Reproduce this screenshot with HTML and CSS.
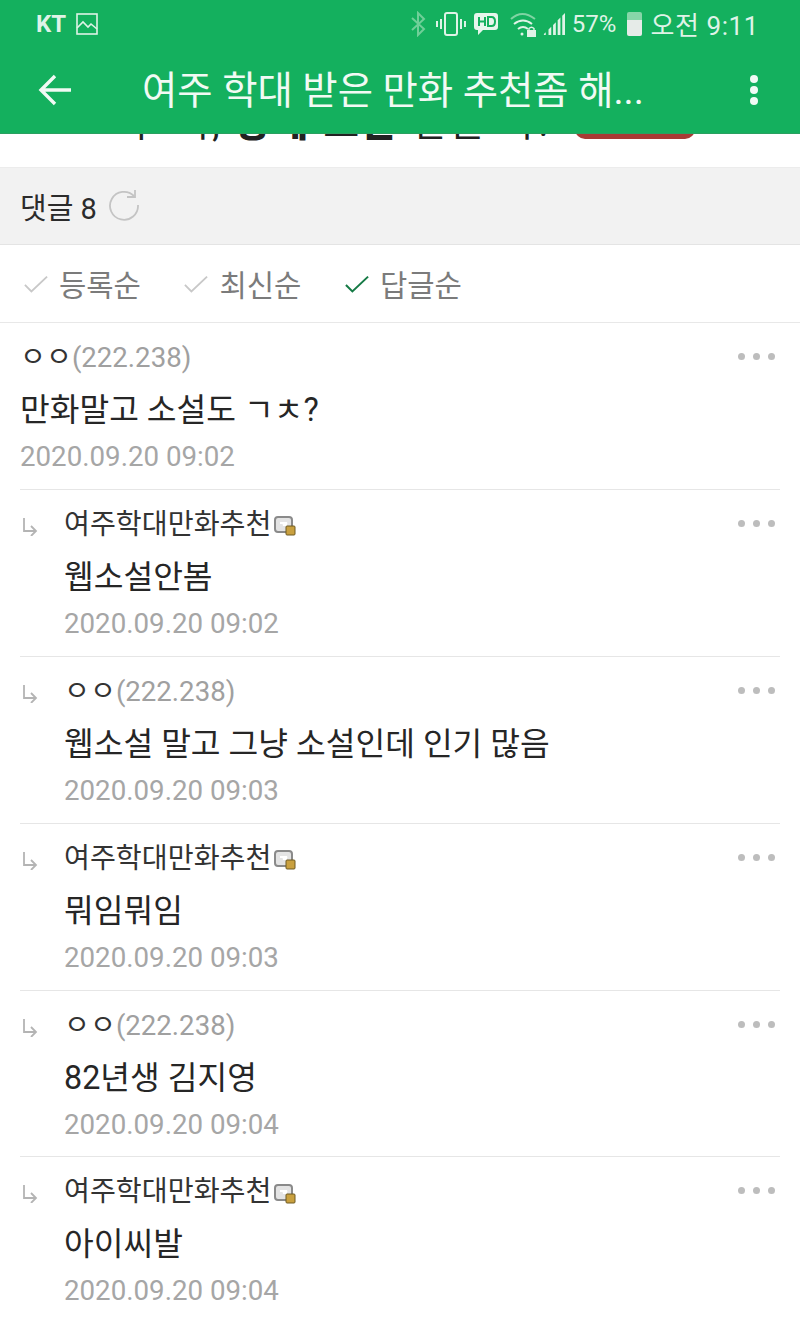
FILE: index.html
```html
<!DOCTYPE html>
<html lang="ko">
<head>
    <meta charset="UTF-8">
    <title>댓글</title>
    <link rel="stylesheet" href="styles.css">
</head>
<body>
    <!-- Status bar and title -->
    <header class="app-head">
        <div class="status-bar">
            <div class="status-left">
                <span class="carrier">KT</span>
                <svg class="pic-icon" width="22" height="22" viewBox="0 0 22 22" fill="none" stroke="#dff3e7" stroke-width="1.6"><rect x="1" y="1" width="20" height="20"/><path d="M1 15l6-6 5 5 3-3 6 5"/></svg>
            </div>
            <div class="status-right">
                <svg class="bt" width="16" height="26" viewBox="0 0 16 26" fill="none" stroke="#6fcf98" stroke-width="2"><path d="M2 7l12 11-6 6V2l6 6L2 19"/></svg>
                <svg class="vib" width="30" height="26" viewBox="0 0 30 26" fill="none" stroke="#dff3e7" stroke-width="2"><rect x="9" y="2" width="12" height="22" rx="2"/><path d="M5 8v10M1 10v6M25 8v10M29 10v6"/></svg>
                <svg class="hd" width="26" height="24" viewBox="0 0 26 24"><path d="M4 1h18a3 3 0 0 1 3 3v11a3 3 0 0 1-3 3H10l-5 5v-5H4a3 3 0 0 1-3-3V4a3 3 0 0 1 3-3z" fill="#e6f6ec"/><path d="M6 5v9M12 5v9M6 9.500h6M15 5v9h3.500q3.500 0 3.500-4.500T18.500 5z" fill="none" stroke="#14b05e" stroke-width="2"/></svg>
                <svg class="wifi" width="26" height="26" viewBox="0 0 26 26" fill="none" stroke="#dff3e7" stroke-width="2"><path d="M1 8q11-10 24 0" stroke="#7fd4a3"/><path d="M4 13q9-7 18 0M8 18q5-4 10 0"/><circle cx="12" cy="23" r="1.500" fill="#dff3e7" stroke="none"/><rect x="17" y="19" width="9" height="7" fill="#dff3e7" stroke="none"/><path d="M19 19.500v-2q2.500-2.500 5 0v2" stroke-width="1.400"/></svg>
                <svg width="22" height="24" viewBox="0 0 24 24" fill="#dff3e7"><path d="M1 24h2v-3l-2 2zM6 24h3v-9l-3 3zM11 24h3V10l-3 3zM16 24h3V5l-3 3zM21 24h3V0l-3 3z"/></svg>
                <span class="battery-text">57%</span>
                <span class="battery"></span>
                <span class="clock">오전 9:11</span>
            </div>
        </div>
        <div class="toolbar">
            <svg class="back" width="34" height="32" viewBox="0 0 34 32" fill="none" stroke="#f1faf4" stroke-width="3.400"><path d="M33 16H3M17 2L3 16l14 14"/></svg>
            <h1 class="page-title">여주 학대 받은 만화 추천좀 해...</h1>
            <div class="kebab"><i></i><i></i><i></i></div>
        </div>
    </header>

    <!-- Post bottom, cut off by the header -->
    <div class="post-end">
        <span class="post-end-text">구 회, <b>중세 고른</b> 만든 화!</span>
        <span class="post-end-btn"></span>
    </div>

    <div class="reply-head">
        <span>댓글 8</span>
        <svg class="refresh" width="32" height="32" viewBox="0 0 32 32" fill="none" stroke="#c4c4c4" stroke-width="1.800"><path d="M26 7a14 14 0 1 0 4 9"/><path d="M19 8h8V1"/></svg>
    </div>

    <div class="sort-row">
        <span class="sort-item"><svg class="check" width="24" height="20" viewBox="0 0 26 20" fill="none" stroke="#c8c8c8" stroke-width="2"><path d="M1 11l7 7L25 2"/></svg>등록순</span>
        <span class="sort-item"><svg class="check" width="24" height="20" viewBox="0 0 26 20" fill="none" stroke="#c8c8c8" stroke-width="2"><path d="M1 11l7 7L25 2"/></svg>최신순</span>
        <span class="sort-item"><svg class="check" width="24" height="20" viewBox="0 0 26 20" fill="none" stroke="#157a45" stroke-width="2.200"><path d="M1 11l7 7L25 2"/></svg>답글순</span>
    </div>

    <!-- Comments -->
    <ul class="comments">
        <li class="comment">
            <div class="comment-body">
                <div class="nick">ㅇㅇ<span class="ip">(222.238)</span></div>
                <p class="text">만화말고 소설도 ㄱㅊ?</p>
                <div class="date">2020.09.20 09:02</div>
            </div>
            <div class="more"><i></i><i></i><i></i></div>
        </li>
        <li class="comment">
            <svg class="re-arrow" width="16" height="18" viewBox="0 0 16 18" fill="none" stroke="#b4b4b4" stroke-width="1.800"><path d="M2 0v13h12M9 8l5 5-5 5"/></svg>
            <div class="comment-body">
                <div class="nick">여주학대만화추천<svg class="badge" width="22" height="20" viewBox="0 0 22 20"><rect x="1" y="1" width="17" height="15" rx="3" fill="#e4e4e4" stroke="#8a8a8a" stroke-width="2"/><path d="M6 7h7l-4 2h4" fill="none" stroke="#fff" stroke-width="2"/><rect x="12" y="10" width="9" height="9" rx="1" fill="#c9a03f" stroke="#6f5a22"/></svg></div>
                <p class="text">웹소설안봄</p>
                <div class="date">2020.09.20 09:02</div>
            </div>
            <div class="more"><i></i><i></i><i></i></div>
        </li>
        <li class="comment">
            <svg class="re-arrow" width="16" height="18" viewBox="0 0 16 18" fill="none" stroke="#b4b4b4" stroke-width="1.800"><path d="M2 0v13h12M9 8l5 5-5 5"/></svg>
            <div class="comment-body">
                <div class="nick">ㅇㅇ<span class="ip">(222.238)</span></div>
                <p class="text">웹소설 말고 그냥 소설인데 인기 많음</p>
                <div class="date">2020.09.20 09:03</div>
            </div>
            <div class="more"><i></i><i></i><i></i></div>
        </li>
        <li class="comment">
            <svg class="re-arrow" width="16" height="18" viewBox="0 0 16 18" fill="none" stroke="#b4b4b4" stroke-width="1.800"><path d="M2 0v13h12M9 8l5 5-5 5"/></svg>
            <div class="comment-body">
                <div class="nick">여주학대만화추천<svg class="badge" width="22" height="20" viewBox="0 0 22 20"><rect x="1" y="1" width="17" height="15" rx="3" fill="#e4e4e4" stroke="#8a8a8a" stroke-width="2"/><path d="M6 7h7l-4 2h4" fill="none" stroke="#fff" stroke-width="2"/><rect x="12" y="10" width="9" height="9" rx="1" fill="#c9a03f" stroke="#6f5a22"/></svg></div>
                <p class="text">뭐임뭐임</p>
                <div class="date">2020.09.20 09:03</div>
            </div>
            <div class="more"><i></i><i></i><i></i></div>
        </li>
        <li class="comment">
            <svg class="re-arrow" width="16" height="18" viewBox="0 0 16 18" fill="none" stroke="#b4b4b4" stroke-width="1.800"><path d="M2 0v13h12M9 8l5 5-5 5"/></svg>
            <div class="comment-body">
                <div class="nick">ㅇㅇ<span class="ip">(222.238)</span></div>
                <p class="text">82년생 김지영</p>
                <div class="date">2020.09.20 09:04</div>
            </div>
            <div class="more"><i></i><i></i><i></i></div>
        </li>
        <li class="comment">
            <svg class="re-arrow" width="16" height="18" viewBox="0 0 16 18" fill="none" stroke="#b4b4b4" stroke-width="1.800"><path d="M2 0v13h12M9 8l5 5-5 5"/></svg>
            <div class="comment-body">
                <div class="nick">여주학대만화추천<svg class="badge" width="22" height="20" viewBox="0 0 22 20"><rect x="1" y="1" width="17" height="15" rx="3" fill="#e4e4e4" stroke="#8a8a8a" stroke-width="2"/><path d="M6 7h7l-4 2h4" fill="none" stroke="#fff" stroke-width="2"/><rect x="12" y="10" width="9" height="9" rx="1" fill="#c9a03f" stroke="#6f5a22"/></svg></div>
                <p class="text">아이씨발</p>
                <div class="date">2020.09.20 09:04</div>
            </div>
            <div class="more"><i></i><i></i><i></i></div>
        </li>
    </ul>
</body>
</html>
```
FILE: styles.css
```css
/* Page */
* {
    box-sizing: border-box;
}

body {
    margin: 0;
    background-color: #fff;
    color: #2b2b2b;
    font-family: Roboto, "Noto Sans CJK KR", sans-serif;
    overflow: hidden;
}

/* Green header */
.app-head {
    height: 134px;
    background-color: #14b05e;
    color: #f1faf4;
    border-bottom: 1px solid #2aa060;
    position: relative;
    z-index: 1;
}

.status-bar {
    height: 46px;
    padding: 1px 41px 0 36px;
    display: flex;
    justify-content: space-between;
    align-items: center;
}

.status-left,
.status-right {
    display: flex;
    align-items: center;
}

.carrier {
    font-size: 24px;
    font-weight: 700;
    color: #dff3e7;
    margin-right: 10px;
}

.status-right {
    gap: 7px;
    color: #dff3e7;
}

.bt {
    margin-right: 3px;
}

.wifi {
    margin-left: 4px;
}

.battery-text {
    font-size: 24px;
    margin-right: 3px;
}

.battery {
    width: 15px;
    height: 24px;
    margin: 0 1px;
    border-radius: 2px;
    background: linear-gradient(#86d6a8 35%, #e6ebe8 35%);
}

.clock {
    font-size: 26px;
    letter-spacing: 0.6px;
}

.toolbar {
    height: 87px;
    padding: 0 38px;
    display: flex;
    align-items: center;
}

.back {
    flex: none;
}

.page-title {
    margin: 3px 0 0 70px;
    flex: 1;
    font-size: 38.400px;
    font-weight: 400;
    line-height: 1;
    white-space: nowrap;
}

.kebab {
    display: flex;
    flex-direction: column;
    gap: 3px;
    margin-right: 4px;
}

.kebab i {
    width: 8px;
    height: 8px;
    border-radius: 50%;
    background-color: #f1faf4;
}

/* Bit of the post left under the header */
.post-end {
    height: 33px;
    overflow: hidden;
    position: relative;
}

.post-end-text {
    display: block;
    margin: -33px 0 0 124px;
    font-size: 38px;
    line-height: 44px;
    letter-spacing: 3px;
    color: #222;
    white-space: nowrap;
}

.post-end-text b {
    font-weight: 900;
}

.post-end-btn {
    position: absolute;
    left: 575px;
    top: -20px;
    width: 120px;
    height: 25px;
    border-radius: 10px;
    background-color: #a83a35;
}

/* Comment count */
.reply-head {
    height: 78px;
    padding: 0 20px;
    display: flex;
    align-items: center;
    gap: 11px;
    background-color: #f2f2f2;
    border-top: 1px solid #ececec;
    border-bottom: 1px solid #e4e4e4;
    font-size: 29px;
}

.refresh {
    margin-bottom: 2px;
}

/* Sort options */
.sort-row {
    height: 78px;
    padding: 0 24px;
    display: flex;
    align-items: center;
    gap: 43.500px;
    border-bottom: 1px solid #e8e8e8;
}

.sort-item {
    display: flex;
    align-items: center;
    font-size: 29.700px;
    color: #7b7b7b;
}

.check {
    margin-right: 11px;
}

/* Comment list */
.comments {
    list-style: none;
    margin: 0 20px;
    padding: 0;
}

.comment {
    height: 166.900px;
    padding-top: 17px;
    display: flex;
    border-bottom: 1px solid #e6e6e6;
}

.re-arrow {
    flex: none;
    margin: 11px 26px 0 2px;
}

.comment-body {
    flex: 1;
}

.nick {
    height: 36px;
    display: flex;
    align-items: center;
    font-size: 28.200px;
    line-height: 36px;
    color: #333;
}

.ip {
    color: #a0a0a0;
    font-size: 27.600px;
}

.badge {
    margin: 3px 0 0 3px;
}

.text {
    margin: 12px 0 0;
    font-size: 32.300px;
    line-height: 44px;
    color: #262626;
}

.date {
    margin-top: 7px;
    font-size: 27.700px;
    line-height: 36px;
    color: #a6a6a6;
}

.more {
    display: flex;
    gap: 8px;
    margin: 13px 5px 0 0;
    height: 7px;
}

.more i {
    width: 7px;
    height: 7px;
    border-radius: 50%;
    background-color: #bdbdbd;
}
```
